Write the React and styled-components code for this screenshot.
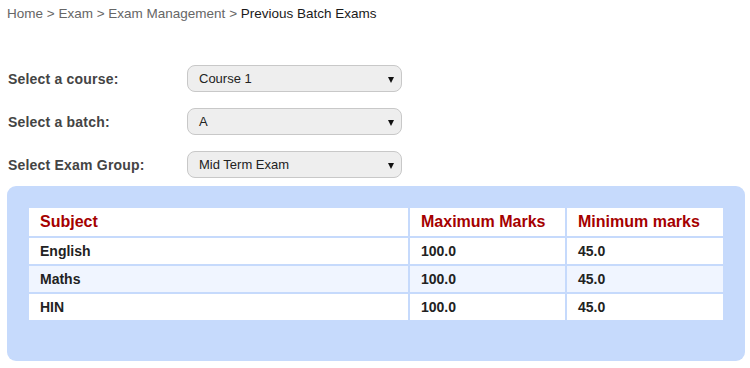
import styled, { createGlobalStyle } from "styled-components";

const GlobalStyle = createGlobalStyle`
  body {
    margin: 0;
    background: #fff;
    font-family: "Liberation Sans", Arial, sans-serif;
  }
`;

const filters = [
  { label: "Select a course:", value: "Course 1" },
  { label: "Select a batch:", value: "A" },
  { label: "Select Exam Group:", value: "Mid Term Exam" },
];

const exams = [
  { subject: "English", max: "100.0", min: "45.0" },
  { subject: "Maths", max: "100.0", min: "45.0" },
  { subject: "HIN", max: "100.0", min: "45.0" },
];

function App() {
  return (
    <>
      <GlobalStyle />
      <Page>
        <Breadcrumb>
          <Crumb>Home</Crumb> &gt; <Crumb>Exam</Crumb> &gt; <Crumb>Exam Management</Crumb> &gt;{" "}
          <Current>Previous Batch Exams</Current>
        </Breadcrumb>

        <Form>
          {filters.map((f) => (
            <FieldRow key={f.label}>
              <Label>{f.label}</Label>
              <SelectBox>
                <SelectText>{f.value}</SelectText>
                <Arrow />
              </SelectBox>
            </FieldRow>
          ))}
        </Form>

        <Panel>
          <Table>
            <thead>
              <tr>
                <HeadCell $w={379}>Subject</HeadCell>
                <HeadCell $w={155}>Maximum Marks</HeadCell>
                <HeadCell>Minimum marks</HeadCell>
              </tr>
            </thead>
            <tbody>
              {exams.map((e, i) => (
                <Row key={e.subject} $alt={i % 2 === 1}>
                  <Cell>{e.subject}</Cell>
                  <Cell>{e.max}</Cell>
                  <Cell>{e.min}</Cell>
                </Row>
              ))}
            </tbody>
          </Table>
        </Panel>
      </Page>
    </>
  );
}

export default App;

const Page = styled.div`
  padding: 6px 5px 0 7px;
`;

const Breadcrumb = styled.div`
  font-size: 13.5px;
  line-height: 16px;
  color: #666;
`;

const Crumb = styled.span`
  color: #666;
`;

const Current = styled.span`
  color: #1a1a1a;
`;

const Form = styled.div`
  display: flex;
  flex-direction: column;
  gap: 16px;
  margin-top: 43px;
  padding-left: 1px;
`;

const FieldRow = styled.div`
  display: flex;
  align-items: center;
  height: 27px;
`;

const Label = styled.div`
  width: 179px;
  font-size: 14px;
  font-weight: bold;
  letter-spacing: 0.2px;
  color: #444;
`;

const SelectBox = styled.div`
  position: relative;
  box-sizing: border-box;
  width: 215px;
  height: 27px;
  display: flex;
  align-items: center;
  padding-left: 11px;
  background: #eeeeee;
  border: 1px solid #c8c8c8;
  border-radius: 8px;
`;

const SelectText = styled.span`
  font-size: 13px;
  color: #222;
`;

const Arrow = styled.span`
  position: absolute;
  right: 7px;
  top: 11px;
  width: 0;
  height: 0;
  border-left: 3.5px solid transparent;
  border-right: 3.5px solid transparent;
  border-top: 6px solid #111;
`;

const Panel = styled.div`
  margin-top: 8px;
  width: 738px;
  box-sizing: border-box;
  padding: 20px 20px 39px;
  background: #c6dafc;
  border-radius: 9px;
`;

const Table = styled.table`
  width: 100%;
  border-collapse: separate;
  border-spacing: 2px;
`;

const HeadCell = styled.th`
  ${({ $w }) => ($w ? `width: ${$w}px;` : "")}
  height: 28px;
  padding: 0 11px;
  box-sizing: border-box;
  background: #fff;
  text-align: left;
  font-size: 16px;
  font-weight: bold;
  color: #a50000;
`;

const Row = styled.tr`
  background: ${({ $alt }) => ($alt ? "#f0f5ff" : "#fff")};
`;

const Cell = styled.td`
  height: 26px;
  padding: 0 11px;
  box-sizing: border-box;
  font-size: 14px;
  font-weight: bold;
  color: #222;
`;
